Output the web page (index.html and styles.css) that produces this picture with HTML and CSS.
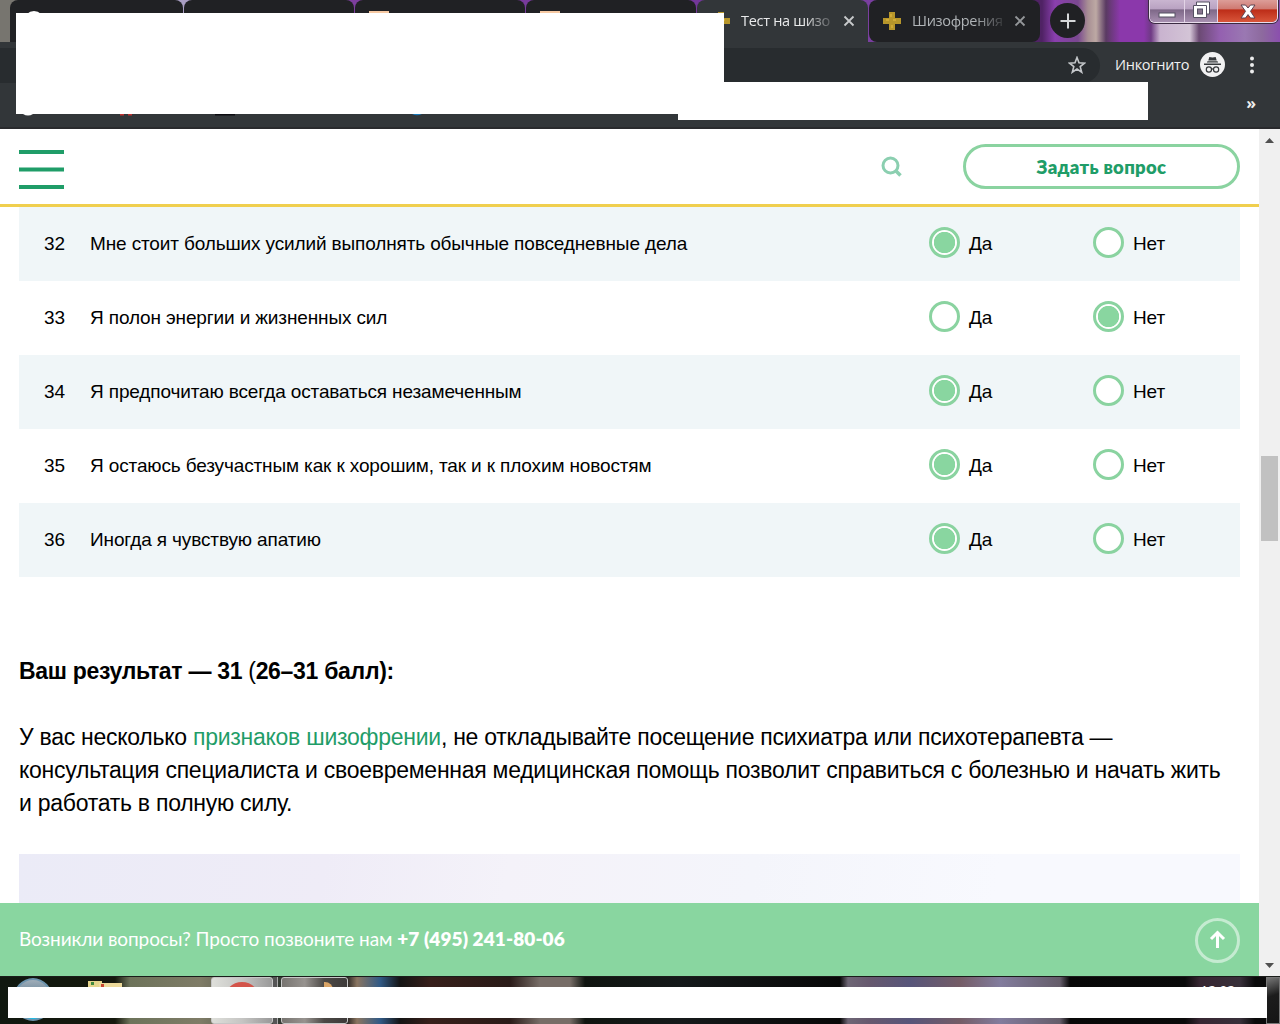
FILE: index.html
```
<!DOCTYPE html>
<html lang="ru">
<head>
    <meta charset="UTF-8">
    <meta name="viewport" content="width=device-width, initial-scale=1.0">
    <title>Тест на шизофрению</title>
    <link rel="stylesheet" href="styles.css">
</head>
<body>
    <div class="browser">
        <div class="tab-strip">
            <div class="tab tab-first"><span class="favicon favicon-round"></span></div>
            <div class="tab"></div>
            <div class="tab"><span class="favicon favicon-orange"></span></div>
            <div class="tab"><span class="favicon favicon-orange"></span></div>
            <div class="tab tab-active">
                <svg class="favicon" viewBox="0 0 20 20"><path d="M7 1h6v6h6v6h-6v6H7v-6H1V7h6z" fill="#b7962b"/><path d="M8 3h2v3H8zM11 8h3v2h-3zM4 8h3v2H4zM9 14h2v3H9z" fill="#d0aa35"/></svg>
                <span class="tab-title">Тест на шизо</span>
                <svg class="tab-close" viewBox="0 0 12 12"><path d="M1.5 1.5l9 9M10.5 1.5l-9 9"/></svg>
            </div>
            <div class="tab tab-last">
                <svg class="favicon" viewBox="0 0 20 20"><path d="M7 1h6v6h6v6h-6v6H7v-6H1V7h6z" fill="#b7962b"/><path d="M8 3h2v3H8zM11 8h3v2h-3zM4 8h3v2H4zM9 14h2v3H9z" fill="#d0aa35"/></svg>
                <span class="tab-title">Шизофрения</span>
                <svg class="tab-close" viewBox="0 0 12 12"><path d="M1.5 1.5l9 9M10.5 1.5l-9 9"/></svg>
            </div>
            <div class="new-tab">
                <svg width="16" height="16" viewBox="0 0 16 16"><path d="M8 .5v15M.5 8h15" stroke="#d6d8da" stroke-width="2"/></svg>
            </div>
            <div class="window-buttons">
                <div class="win-btn win-min">
                    <svg width="18" height="6" viewBox="0 0 18 6"><rect x="1" y="1" width="16" height="4" fill="#fff" stroke="#555063"/></svg>
                </div>
                <div class="win-btn win-max">
                    <svg width="19" height="18" viewBox="0 0 19 18"><path d="M4.500 1h13v12h-3v3.500h-13v-12h3z" fill="#fff" stroke="#555063"/><path d="M4.500 4.500h10v8.500" fill="none" stroke="#555063"/><rect x="5.500" y="8" width="5" height="5" fill="#87758f" stroke="#555063"/></svg>
                </div>
                <div class="win-btn win-close">
                    <svg width="16" height="15" viewBox="0 0 16 15"><path d="M1 1h4.500L8 4l2.500-3H15l-4.500 6.300L15 14h-4.500L8 10.600 5.500 14H1l4.500-6.700z" fill="#fff" stroke="#5c4250"/></svg>
                </div>
            </div>
        </div>

        <div class="toolbar">
            <div class="omnibox">
                <svg width="18" height="18" viewBox="0 0 18 18"><path d="M9 1.500l2 5.300 5.500.3-4.300 3.500 1.500 5.600L9 13l-4.700 3.200 1.500-5.600L1.500 7.100l5.500-.3z" fill="none" stroke="#c4c7ca" stroke-width="1.600"/></svg>
            </div>
            <span class="incognito-label">Инкогнито</span>
            <svg class="incognito-icon" width="25" height="25" viewBox="0 0 25 25"><circle cx="12.500" cy="12.500" r="12.500" fill="#f1f1f2"/><path d="M9.300 5l3.200.6 3.200-.6 1 3.500H8.300z" fill="#35383b"/><path d="M7.500 9.300h10l.7 1.200H6.800zM4 11.500h17V13H4z" fill="#35383b"/><g fill="none" stroke="#35383b" stroke-width="1.200"><circle cx="8.900" cy="17.500" r="2.600"/><circle cx="16.100" cy="17.500" r="2.600"/><path d="M11.500 17.200q1-.8 2 0"/></g></svg>
            <svg class="kebab" width="6" height="18" viewBox="0 0 6 18"><g fill="#eceded"><circle cx="3" cy="2.500" r="2"/><circle cx="3" cy="9" r="2"/><circle cx="3" cy="15.500" r="2"/></g></svg>
        </div>

        <div class="bookmarks">
            <svg width="430" height="4" viewBox="0 0 430 4"><path d="M1 0h10q-5 3-10 0" fill="#fff"/><path d="M98 0h4v1.500h-4zM106 0h4v1.500h-4z" fill="#c03030"/><path d="M193 0h20v1.500h-20z" fill="#0b0b10"/><path d="M390 0h10q-5 2.500-10 0" fill="#1777b7"/></svg>
            <span class="more">»</span>
        </div>

        <div class="blank blank-top"></div>
        <div class="blank blank-address"></div>
        <div class="blank blank-bookmarks"></div>
    </div>

    <div class="viewport">
        <div class="page">
            <header class="header">
                <svg class="burger" width="45" height="40" viewBox="0 0 45 40"><path d="M0 3h45M0 20.500h45M0 38h45" stroke="#1f9d68" stroke-width="4"/></svg>
                <svg class="search" width="22" height="22" viewBox="0 0 22 22"><circle cx="9.500" cy="9.500" r="7.500" fill="none" stroke="#8bcfb0" stroke-width="3"/><path d="M14.500 14.500l5 5" stroke="#8bcfb0" stroke-width="3.500"/></svg>
                <button class="ask">Задать вопрос</button>
            </header>

            <main class="content">
                <div class="questions">
                    <div class="row row-tinted">
                        <span class="num">32</span>
                        <span class="question">Мне стоит больших усилий выполнять обычные повседневные дела</span>
                        <span class="answer"><i class="radio checked"></i>Да</span>
                        <span class="answer"><i class="radio"></i>Нет</span>
                    </div>
                    <div class="row">
                        <span class="num">33</span>
                        <span class="question">Я полон энергии и жизненных сил</span>
                        <span class="answer"><i class="radio"></i>Да</span>
                        <span class="answer"><i class="radio checked"></i>Нет</span>
                    </div>
                    <div class="row row-tinted">
                        <span class="num">34</span>
                        <span class="question">Я предпочитаю всегда оставаться незамеченным</span>
                        <span class="answer"><i class="radio checked"></i>Да</span>
                        <span class="answer"><i class="radio"></i>Нет</span>
                    </div>
                    <div class="row">
                        <span class="num">35</span>
                        <span class="question">Я остаюсь безучастным как к хорошим, так и к плохим новостям</span>
                        <span class="answer"><i class="radio checked"></i>Да</span>
                        <span class="answer"><i class="radio"></i>Нет</span>
                    </div>
                    <div class="row row-tinted">
                        <span class="num">36</span>
                        <span class="question">Иногда я чувствую апатию</span>
                        <span class="answer"><i class="radio checked"></i>Да</span>
                        <span class="answer"><i class="radio"></i>Нет</span>
                    </div>
                </div>

                <h3 class="result-title">Ваш результат — 31 <span class="thin">(</span>26–31 балл):</h3>
                <p class="result-text">У вас несколько <a href="#">признаков шизофрении</a>, не откладывайте посещение психиатра или психотерапевта —<br>консультация специалиста и своевременная медицинская помощь позволит справиться с болезнью и начать жить<br>и работать в полную силу.</p>
                <div class="banner"></div>
            </main>

            <footer class="call-bar">
                <span class="call-text">Возникли вопросы? Просто позвоните нам <b>+7 (495) 241-80-06</b></span>
                <svg width="45" height="45" viewBox="0 0 45 45"><circle cx="22.500" cy="22.500" r="21" fill="none" stroke="#c5ebd1" stroke-width="3"/><path d="M22.500 30V15M16 21l6.500-6.500L29 21" fill="none" stroke="#fff" stroke-width="3"/></svg>
            </footer>
        </div>
        <div class="scrollbar">
            <svg width="9" height="5" viewBox="0 0 9 5"><path d="M0 5L4.500 0 9 5z" fill="#505050"/></svg>
            <div class="thumb"></div>
            <svg width="9" height="5" viewBox="0 0 9 5"><path d="M0 0h9L4.500 5z" fill="#505050"/></svg>
        </div>
    </div>

    <div class="taskbar">
        <div class="start"></div>
        <svg class="explorer" width="38" height="48" viewBox="0 0 38 48"><path d="M1 6h14v10H1z" fill="#e4d48b"/><path d="M12 8h23v8H12z" fill="#ecd99a"/><path d="M4 7h3v3H4z" fill="#3f8a3c"/><path d="M14 9h3v3h-3z" fill="#c8452f"/><path d="M3 42h10v1H3zM22 42h10v1H22z" fill="#2f7ea8"/></svg>
        <div class="task task-light"><div class="task-logo"></div></div>
        <div class="task-stack"></div>
        <div class="task"><div class="task-paint"></div></div>
        <span class="clock">12:02</span>
        <div class="show-desktop"></div>
        <div class="blank blank-taskbar"></div>
    </div>
</body>
</html>
```
FILE: styles.css
```
* {
    margin: 0;
    padding: 0;
    box-sizing: border-box;
}

body {
    width: 1280px;
    height: 1024px;
    display: flex;
    flex-direction: column;
    overflow: hidden;
    background: #fff;
    color: #000;
    font-family: "Liberation Sans", Arial, sans-serif;
}

svg {
    display: block;
    flex-shrink: 0;
}

/* browser window */
.browser {
    position: relative;
    height: 129px;
    flex-shrink: 0;
    background: #323639;
    border-bottom: 2px solid #292a2d;
    font-family: "Open Sans", "Noto Sans", sans-serif;
}

.tab-strip {
    display: flex;
    height: 42px;
    padding-left: 10px;
    background: linear-gradient(90deg, #77756f 0, #77756f 10px, #aaa0c4 180px, #7d3e9e 355px, #73379a 700px, #7a3fa0 869px, #4f2264 1042px, #8a3fae 1055px, #7a4890 1078px, #a88f94 1088px, #bda9a4 1096px, #5a3a62 1106px, #8b38ab 1120px, #8b38ab 1144px, #6e3a84 1151px, #c9b3cf 1160px, #d3c4d6 1190px, #6b4a73 1199px, #9460b0 1220px, #9a78b2 1245px, #8d6a9e 1262px, #8b4fae 1280px);
}

.tab {
    display: flex;
    width: 170px;
    height: 42px;
    margin-right: 1px;
    flex-shrink: 0;
    padding: 11px 9px 0 14px;
    background: #202124;
    border-radius: 8px 8px 0 0;
}

.tab-first {
    width: 173px;
}

.tab-active {
    width: 171px;
    background: #323639;
}

.tab-last {
    width: 171px;
    padding-left: 13px;
    border-radius: 8px;
    margin-right: 10px;
}

.favicon {
    width: 20px;
    height: 20px;
    flex-shrink: 0;
}

.favicon-round {
    background: #fff;
    border-radius: 50%;
}

.favicon-orange {
    background: #f6c9a3;
}

.tab-title {
    width: 92px;
    height: 20px;
    margin-left: 10px;
    white-space: nowrap;
    font-size: 14.500px;
    line-height: 20px;
    letter-spacing: -0.300px;
    color: #e9eaeb;
    -webkit-mask-image: linear-gradient(90deg, #000 68%, transparent 105%);
    mask-image: linear-gradient(90deg, #000 68%, transparent 105%);
}

.tab-last .tab-title {
    color: #b0b4b7;
}

.tab-close {
    width: 12px;
    height: 12px;
    margin: 4px 0 0 10px;
    fill: none;
    stroke: #c8cacc;
    stroke-width: 1.800;
}

.tab-last .tab-close {
    stroke: #94979a;
}

.new-tab {
    display: flex;
    align-items: center;
    justify-content: center;
    width: 35px;
    height: 35px;
    margin-top: 3px;
    border-radius: 50%;
    background: #202124;
}

.window-buttons {
    display: flex;
    width: 129px;
    height: 23px;
    margin-left: 64px;
    overflow: hidden;
    border: 1px solid #e8dcec;
    border-top: none;
    border-radius: 0 0 6px 6px;
    box-shadow: 0 0 0 1px #3b2b42;
}

.win-btn {
    display: flex;
    align-items: center;
    justify-content: center;
    width: 35px;
    background: linear-gradient(#c9b5d0 0, #b9a2c2 40%, #7e6888 45%, #a78fb0 100%);
    border-right: 1px solid #e2d4e6;
}

.win-min {
    padding-top: 8px;
}

.win-max {
    width: 33px;
    padding-bottom: 2px;
}

.win-close {
    flex: 1;
    border-right: none;
    background: linear-gradient(#dc9d98 0, #cf7a72 40%, #bd2d18 45%, #d8553a 100%);
}

.toolbar {
    display: flex;
    align-items: center;
    height: 45px;
}

.omnibox {
    display: flex;
    align-items: center;
    justify-content: flex-end;
    width: 1100px;
    height: 35px;
    margin-top: 1px;
    padding-right: 14px;
    border-radius: 0 18px 18px 0;
    background: #282c2f;
}

.incognito-label {
    width: 74px;
    margin-left: 15px;
    font-size: 14.500px;
    letter-spacing: -0.280px;
    color: #f1f1f1;
}

.incognito-icon {
    margin-left: 11px;
}

.kebab {
    margin-left: 24px;
}

.bookmarks {
    display: flex;
    align-items: flex-start;
    height: 40px;
    padding: 0 24px 0 22px;
}

.bookmarks svg {
    margin-top: 27px;
}

.more {
    margin-left: auto;
    font-size: 16px;
    line-height: 33px;
    font-weight: bold;
    color: #eee;
}

/* empty boxes lying over the window and the taskbar */
.blank {
    position: absolute;
    background: #fff;
}

.blank-top {
    left: 16px;
    top: 13px;
    width: 708px;
    height: 69px;
}

.blank-address {
    left: 16px;
    top: 82px;
    width: 662px;
    height: 32px;
}

.blank-bookmarks {
    left: 678px;
    top: 82px;
    width: 470px;
    height: 38px;
}

/* page */
.viewport {
    display: flex;
    height: 847px;
    flex-shrink: 0;
}

.page {
    display: flex;
    flex-direction: column;
    width: 1259px;
}

.header {
    display: flex;
    align-items: center;
    height: 78px;
    padding: 0 19px;
    border-bottom: 3px solid #f0cf4e;
    flex-shrink: 0;
}

.burger {
    margin-top: 4px;
}

.search {
    margin: 1px 60px 0 auto;
}

.ask {
    width: 277px;
    height: 45px;
    border: 3px solid #8ad3a0;
    border-radius: 23px;
    background: #fff;
    color: #1f9d68;
    font-family: Lato, sans-serif;
    font-size: 18.500px;
    letter-spacing: 0.300px;
    font-weight: 800;
}

.content {
    flex: 1;
    padding: 0 19px;
}

.row {
    display: flex;
    align-items: center;
    height: 74px;
    padding-left: 25px;
    font-size: 19px;
    letter-spacing: -0.135px;
}

.row-tinted {
    background: #f0f6f8;
}

.num {
    flex: 0 0 46px;
}

.question {
    flex: 0 0 839px;
    white-space: nowrap;
}

.answer {
    display: flex;
    align-items: center;
    flex: 0 0 164px;
}

.row .answer:last-child {
    flex: 1;
}

.radio {
    width: 31px;
    height: 31px;
    margin: -3px 9px 0 0;
    border: 3px solid #8ad3a0;
    border-radius: 50%;
    background: #fff;
}

.radio.checked {
    background: radial-gradient(circle, #89d6a0 10.300px, #fff 11px);
}

.result-title {
    margin-top: 78px;
    font-size: 23px;
    line-height: 33px;
    letter-spacing: -0.300px;
}

.thin {
    font-weight: normal;
}

.result-text {
    margin-top: 33px;
    font-size: 23px;
    line-height: 33px;
    letter-spacing: -0.262px;
    white-space: nowrap;
}

.result-text a {
    color: #1f9d68;
    text-decoration: none;
}

.banner {
    height: 49px;
    margin-top: 34px;
    background: linear-gradient(100deg, #ebebf7 0, #efecf7 25%, #f4f2f9 40%, #f4f5fb 60%, #f8f9fe 80%, #f8f9fe 100%);
}

.call-bar {
    display: flex;
    align-items: center;
    justify-content: space-between;
    height: 73px;
    flex-shrink: 0;
    padding: 1px 19px 0;
    background: #89d6a0;
    color: #fff;
    font-family: Lato, sans-serif;
    font-size: 19px;
}

.call-text {
    padding-bottom: 4px;
    letter-spacing: -0.080px;
    white-space: nowrap;
}

.call-text b {
    font-weight: 800;
    letter-spacing: 0.100px;
}

.scrollbar {
    display: flex;
    flex-direction: column;
    align-items: center;
    width: 21px;
    padding: 9px 0 8px;
    background: #f0f0f0;
}

.thumb {
    width: 17px;
    height: 85px;
    margin: 313px 0 auto;
    background: #c1c1c1;
}

/* taskbar */
.taskbar {
    position: relative;
    display: flex;
    height: 48px;
    flex-shrink: 0;
    overflow: hidden;
    border-top: 1px solid #1a1d1a;
    background: linear-gradient(90deg, #10180f 0, #15180d 115px, #6d735a 130px, #7f7c67 200px, #343b33 280px, #141517 345px, #8a7560 357px, #315a86 380px, #141414 400px, #371f1a 430px, #2a1b18 510px, #776d67 540px, #776d67 570px, #101510 585px, #15191a 680px, #080808 840px, #6e6675 848px, #66586e 870px, #57557a 910px, #745c66 960px, #827c9d 1000px, #655d6a 1060px, #080808 1070px, #0a0a0a 1185px, #372632 1200px, #38303a 1240px, #0a0a0a 1255px);
}

.start {
    width: 40px;
    height: 43px;
    margin: 1px 0 0 13px;
    border: 2px solid #6b93ad;
    border-radius: 50%;
    background: linear-gradient(#a0adb8, #54788f 50%, #17c3ee);
}

.explorer {
    margin: -2px 0 0 34px;
}

.task {
    width: 67px;
    height: 47px;
    padding-top: 4px;
    border: 1px solid #c6c6c6;
    border-radius: 3px;
    background: linear-gradient(90deg, #777470, #97938f 35%, #4b4845 65%, #3d3a39);
}

.task-light {
    width: 62px;
    margin-left: 86px;
    background: linear-gradient(90deg, #dedfda, #c5c5c3 50%, #999);
}

.task-logo {
    width: 36px;
    height: 36px;
    margin: 0 auto;
    border-radius: 50%;
    background: #d3544a;
}

.task-stack {
    width: 5px;
    margin-right: 3px;
    border-right: 1px solid #aaa;
    background: #555;
}

.task-paint {
    width: 9px;
    height: 20px;
    margin-left: 42px;
    border-radius: 0 8px 0 0;
    background: #d9a466;
}

.clock {
    margin: 4px 31px 0 auto;
    color: #fff;
    font-family: "Open Sans", sans-serif;
    font-size: 13.500px;
    line-height: 18px;
}

.show-desktop {
    width: 14px;
    height: 47px;
    border: 1px solid #777;
    background: linear-gradient(160deg, #777, #1c1c1c 40%, #151515);
}

.blank-taskbar {
    left: 8px;
    top: 10px;
    width: 1259px;
    height: 31px;
}
```
